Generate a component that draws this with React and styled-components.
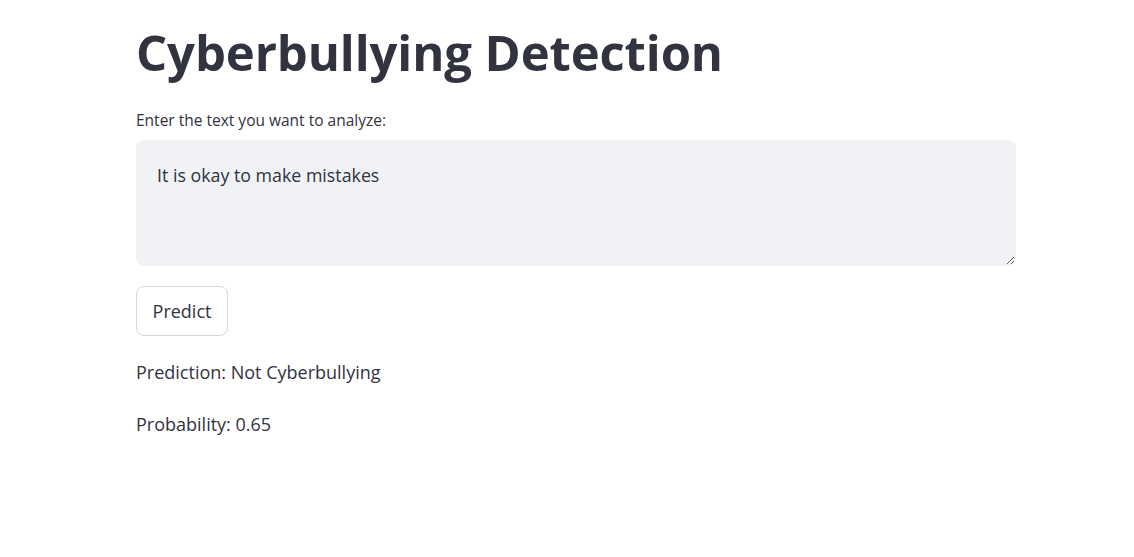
import React, { useState } from "react";
import styled, { createGlobalStyle } from "styled-components";

const GlobalStyle = createGlobalStyle`
  html, body {
    margin: 0;
    padding: 0;
    background: #ffffff;
  }
  body {
    font-family: "Open Sans", Lato, sans-serif;
    color: #31333f;
  }
`;

function App() {
  const [text, setText] = useState("It is okay to make mistakes");

  return (
    <>
      <GlobalStyle />
      <Main>
        <Block>
          <Title>Cyberbullying Detection</Title>
          <Field>
            <Label>Enter the text you want to analyze:</Label>
            <TextArea value={text} onChange={(e) => setText(e.target.value)} />
          </Field>
          <PredictButton>Predict</PredictButton>
          <Results>
            <Result>Prediction: Not Cyberbullying</Result>
            <Result>Probability: 0.65</Result>
          </Results>
        </Block>
      </Main>
    </>
  );
}

const Main = styled.main`
  min-height: 557px;
  padding-left: 136px;
  display: flex;
`;

const Block = styled.div`
  width: 880px;
  padding-top: 22px;
  display: flex;
  flex-direction: column;
  align-items: flex-start;
`;

const Title = styled.h1`
  margin: 0;
  font-size: 49px;
  font-weight: 700;
  line-height: 60px;
  letter-spacing: -0.1px;
  color: #31333f;
`;

const Field = styled.div`
  width: 100%;
  margin-top: 30px;
  display: flex;
  flex-direction: column;
  gap: 11px;
`;

const Label = styled.label`
  font-size: 15.5px;
  line-height: 17px;
  color: #31333f;
`;

const TextArea = styled.textarea`
  box-sizing: border-box;
  width: 100%;
  height: 126px;
  padding: 21px 20px;
  border: 1px solid #f0f2f6;
  border-radius: 8px;
  background: #f0f2f6;
  font-family: "Open Sans", Lato, sans-serif;
  font-size: 17.8px;
  line-height: 26px;
  color: #31333f;
  resize: vertical;
  outline: none;
`;

const PredictButton = styled.button`
  margin-top: 20px;
  width: 92px;
  height: 50px;
  border: 1px solid #d6d6d9;
  border-radius: 8px;
  background: #ffffff;
  font-family: "Open Sans", Lato, sans-serif;
  font-size: 18px;
  color: #31333f;
  cursor: pointer;
`;

const Results = styled.div`
  margin-top: 22px;
  display: flex;
  flex-direction: column;
  gap: 24px;
`;

const Result = styled.p`
  margin: 0;
  font-size: 18px;
  line-height: 28px;
  color: #31333f;
`;

export default App;
